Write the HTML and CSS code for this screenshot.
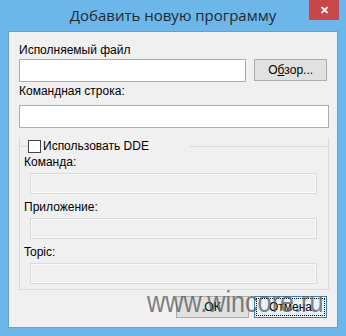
FILE: index.html
```html
<!DOCTYPE html>
<html lang="ru">
<head>
  <meta charset="UTF-8">
  <title>Добавить новую программу</title>
  <link rel="stylesheet" href="styles.css">
</head>
<body>

  <div class="window">
    <div class="titlebar">
      <span class="title">Добавить новую программу</span>
      <span class="close">&#x2715;</span>
    </div>

    <div class="client">
      <div class="label">Исполняемый файл</div>
      <div class="row">
        <div class="field wide"></div>
        <div class="btn">О<u>б</u>зор...</div>
      </div>

      <div class="label">Командная строка:</div>
      <div class="field full"></div>

      <div class="group">
        <div class="legend"><span class="check"></span>Использовать DDE</div>
        <div class="label">Команда:</div>
        <div class="field off"></div>
        <div class="label">Приложение:</div>
        <div class="field off"></div>
        <div class="label">Topic:</div>
        <div class="field off last"></div>
      </div>

      <div class="buttons">
        <div class="btn">ОК</div>
        <div class="btn focus"><span>Отмена</span></div>
      </div>

      <span class="watermark">www.wincore.ru</span>
    </div>
  </div>

</body>
</html>
```

FILE: styles.css
```css
    body {
      margin: 0;
      padding: 0;
      font-family: "Liberation Sans", Arial, sans-serif;
      font-size: 12px;
      color: #000;
    }

    .window {
      width: 346px;
      height: 336px;
      background-color: #6cb6e9;
      display: flex;
      flex-direction: column;
    }

    .titlebar {
      height: 31px;
      position: relative;
      display: flex;
      justify-content: center;
    }

    .title {
      font-family: "Open Sans", "Noto Sans", sans-serif;
      font-size: 15px;
      color: #1e2a33;
      margin-top: 5px;
    }

    .close {
      position: absolute;
      top: 0;
      right: 7px;
      width: 30px;
      height: 20px;
      background-color: #c8484a;
      color: #fff;
      font-size: 11px;
      font-weight: bold;
      display: flex;
      align-items: center;
      justify-content: center;
    }

    .client {
      flex: 1;
      margin: 0 8px 8px 8px;
      background-color: #f0f0f0;
      border: 1px solid #5ea2d3;
      padding: 10px 10px 0 10px;
      position: relative;
    }

    .label {
      height: 16px;
      line-height: 16px;
    }

    .row {
      display: flex;
      gap: 8px;
      margin: 1px 0 1px 0;
    }

    .field {
      height: 22px;
      background-color: #fff;
      border: 1px solid #abadb3;
      box-sizing: border-box;
    }

    .wide {
      width: 228px;
      height: 23px;
    }

    .full {
      width: 310px;
      height: 23px;
      margin: 6px 0 10px 0;
    }

    .btn {
      width: 73px;
      height: 22px;
      box-sizing: border-box;
      border: 1px solid #adadad;
      background-color: #e1e1e1;
      display: flex;
      align-items: center;
      justify-content: center;
    }

    .group {
      width: 310px;
      box-sizing: border-box;
      border: 1px solid #d9d9d9;
      border-top: none;
      padding: 0 0 5px 4px;
      background:
        linear-gradient(#d9d9d9, #d9d9d9) 0 8px / 9px 1px no-repeat,
        linear-gradient(#d9d9d9, #d9d9d9) 171px 8px / 139px 1px no-repeat;
      background-origin: border-box;
    }

    .legend {
      display: flex;
      align-items: center;
      gap: 2px;
      margin-left: 4px;
      height: 16px;
    }

    .check {
      width: 13px;
      height: 13px;
      box-sizing: border-box;
      border: 1px solid #444;
      background-color: #fff;
    }

    .group .label {
      margin-bottom: 3px;
    }

    .off {
      width: 287px;
      height: 21px;
      margin: 0 0 5px 6px;
      background-color: #f0f0f0;
      border: 1px solid #d9d9d9;
      box-shadow: inset 0 0 0 1px #fafafa;
    }

    .off.last {
      margin-bottom: 0;
    }

    .buttons {
      display: flex;
      justify-content: flex-end;
      gap: 5px;
      margin-top: 6px;
    }

    .btn.focus {
      border: 1px solid #3c7fb1;
      background-color: #e5f1fb;
      padding: 1px;
    }

    .btn.focus span {
      flex: 1;
      align-self: stretch;
      border: 1px dotted #000;
      display: flex;
      align-items: center;
      justify-content: center;
    }

    .watermark {
      position: absolute;
      z-index: 1;
      left: 138px;
      top: 255px;
      font-family: "Liberation Sans", sans-serif;
      font-size: 30px;
      line-height: 30px;
      color: rgba(95, 95, 95, 0.8);
      transform: scaleX(0.84);
      transform-origin: left center;
      pointer-events: none;
      white-space: nowrap;
    }
```
